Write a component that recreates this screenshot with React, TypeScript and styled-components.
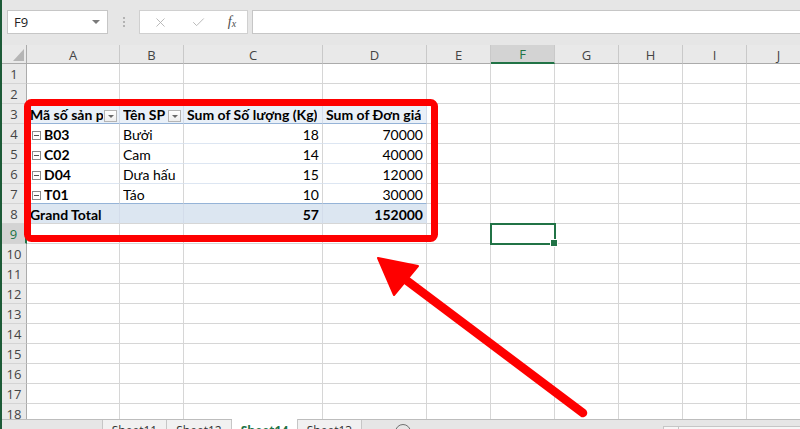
import styled, { createGlobalStyle } from "styled-components";
import { X, Check } from "lucide-react";

const CELL_FONT = `"Lato", "Noto Sans", sans-serif`;
const UI_FONT = `"Open Sans", "Noto Sans", sans-serif`;
const GREEN = "#217346";

type RowKind = "head" | "data" | "lastData" | "total";
type CellData = {
  text?: string;
  bold?: boolean;
  right?: boolean;
  filter?: boolean;
  toggle?: boolean;
};

const COLUMNS = [
  { name: "A", width: 93 },
  { name: "B", width: 64 },
  { name: "C", width: 139 },
  { name: "D", width: 104 },
  { name: "E", width: 64 },
  { name: "F", width: 64 },
  { name: "G", width: 64 },
  { name: "H", width: 64 },
  { name: "I", width: 64 },
  { name: "J", width: 64 },
];

const PIVOT: Record<number, { kind: RowKind; cells: CellData[] }> = {
  3: {
    kind: "head",
    cells: [
      { text: "Mã số sản phẩm", bold: true, filter: true },
      { text: "Tên SP", bold: true, filter: true },
      { text: "Sum of Số lượng (Kg)", bold: true },
      { text: "Sum of Đơn giá", bold: true },
    ],
  },
  4: {
    kind: "data",
    cells: [
      { text: "B03", bold: true, toggle: true },
      { text: "Bưởi" },
      { text: "18", right: true },
      { text: "70000", right: true },
    ],
  },
  5: {
    kind: "data",
    cells: [
      { text: "C02", bold: true, toggle: true },
      { text: "Cam" },
      { text: "14", right: true },
      { text: "40000", right: true },
    ],
  },
  6: {
    kind: "data",
    cells: [
      { text: "D04", bold: true, toggle: true },
      { text: "Dưa hấu" },
      { text: "15", right: true },
      { text: "12000", right: true },
    ],
  },
  7: {
    kind: "lastData",
    cells: [
      { text: "T01", bold: true, toggle: true },
      { text: "Táo" },
      { text: "10", right: true },
      { text: "30000", right: true },
    ],
  },
  8: {
    kind: "total",
    cells: [
      { text: "Grand Total", bold: true },
      {},
      { text: "57", bold: true, right: true },
      { text: "152000", bold: true, right: true },
    ],
  },
};

const SELECTED = { col: "F", row: 9 };
const ROWS = Array.from({ length: 18 }, (_, i) => i + 1);

const TABS = [
  { name: "Sheet11", width: 64 },
  { name: "Sheet12", width: 65 },
  { name: "Sheet14", width: 66, active: true },
  { name: "Sheet13", width: 64 },
];

const GlobalStyle = createGlobalStyle`
  html, body {
    margin: 0;
    padding: 0;
    overflow: hidden;
    background: #e6e6e6;
  }
  * { box-sizing: border-box; }
`;

const Page = styled.div`
  position: relative;
  display: flex;
  width: 800px;
  height: 429px;
  overflow: hidden;
  background: #e6e6e6;
`;

const WindowEdge = styled.div`
  flex: none;
  width: 2px;
  background: #1d5b38;
`;

const Workbook = styled.div`
  flex: 1;
  min-width: 0;
  display: flex;
  flex-direction: column;
`;

const FormulaBar = styled.div`
  flex: none;
  display: flex;
  align-items: center;
  height: 45px;
  padding: 10px 0 11px 5px;
  font-family: ${UI_FONT};
`;

const NameBox = styled.div`
  display: flex;
  align-items: center;
  justify-content: space-between;
  width: 101px;
  height: 24px;
  padding: 0 7px 0 6px;
  background: #fff;
  border: 1px solid #c6c6c6;
  font-size: 13px;
  color: #222;
`;

const Caret = styled.span`
  width: 0;
  height: 0;
  border-left: 4px solid transparent;
  border-right: 4px solid transparent;
  border-top: 4px solid #7a7a7a;
`;

const Grip = styled.div`
  display: flex;
  flex-direction: column;
  align-items: center;
  gap: 2px;
  width: 31px;
`;

const GripDot = styled.span`
  width: 2px;
  height: 2px;
  background: #b3b3b3;
`;

const FnBox = styled.div`
  display: grid;
  grid-template-columns: 40px 37px 30px;
  align-items: center;
  justify-items: center;
  width: 109px;
  height: 24px;
  background: #fff;
  border: 1px solid #d0d0d0;
  color: #b0b0b0;
`;

const FxLabel = styled.span`
  font-family: "Liberation Serif", serif;
  font-style: italic;
  font-size: 14px;
  color: #4d4d4d;

  sub {
    font-size: 10px;
    vertical-align: -1px;
  }
`;

const FormulaInput = styled.div`
  flex: 1;
  height: 24px;
  margin-left: 4px;
  background: #fff;
  border: 1px solid #c6c6c6;
  border-right: none;
`;

const Grid = styled.div`
  flex: none;
  display: grid;
  grid-template-columns: 25px ${COLUMNS.map((c) => `${c.width}px`).join(" ")};
  grid-template-rows: 19px;
  grid-auto-rows: 20px;
  height: 374px;
  overflow: hidden;
  background: #fff;
  font-family: ${CELL_FONT};
`;

const SelectAll = styled.div`
  position: relative;
  background: #e9e9e9;
  border-right: 1px solid #ababab;
  border-bottom: 1px solid #ababab;

  &::after {
    content: "";
    position: absolute;
    right: 2px;
    bottom: 2px;
    border-left: 11px solid transparent;
    border-bottom: 12px solid #b5b5b5;
  }
`;

const ColHeader = styled.div<{ $active?: boolean }>`
  display: flex;
  align-items: center;
  justify-content: center;
  padding-top: 1px;
  background: ${(p) => (p.$active ? "#d3d3d3" : "#e9e9e9")};
  border-right: 1px solid #c9c9c9;
  border-bottom: ${(p) => (p.$active ? `2px solid ${GREEN}` : "1px solid #ababab")};
  font-family: ${UI_FONT};
  font-size: 13px;
  color: ${(p) => (p.$active ? GREEN : "#444")};
`;

const RowHeader = styled.div<{ $active?: boolean }>`
  display: flex;
  align-items: center;
  justify-content: center;
  background: ${(p) => (p.$active ? "#d3d3d3" : "#e9e9e9")};
  border-right: ${(p) => (p.$active ? `2px solid ${GREEN}` : "1px solid #ababab")};
  border-bottom: 1px solid #d4d4d4;
  font-family: ${UI_FONT};
  font-size: 13px;
  color: ${(p) => (p.$active ? GREEN : "#444")};
`;

const rowBg = (kind?: RowKind) =>
  kind === "head" ? "#e9f0f8" : kind === "total" ? "#dce6f1" : "#fff";

const rowLine = (kind?: RowKind) =>
  kind === "head" || kind === "lastData"
    ? "#95b3d7"
    : kind === "data"
      ? "#dde6f2"
      : "#d6d6d6";

const Cell = styled.div<{
  $kind?: RowKind;
  $right?: boolean;
  $bold?: boolean;
  $selected?: boolean;
}>`
  position: relative;
  display: flex;
  align-items: flex-end;
  justify-content: ${(p) => (p.$right ? "flex-end" : "flex-start")};
  min-width: 0;
  padding: 0 3px 0 3px;
  background: ${(p) => rowBg(p.$kind)};
  border-right: 1px solid
    ${(p) => (p.$kind === "head" || p.$kind === "total" ? "#d3dcea" : "#d6d6d6")};
  border-bottom: 1px solid ${(p) => rowLine(p.$kind)};
  font-size: 14px;
  line-height: 17px;
  font-weight: ${(p) => (p.$bold ? 700 : 400)};
  color: #000;
  z-index: ${(p) => (p.$selected ? 2 : "auto")};
  outline: ${(p) => (p.$selected ? `2px solid ${GREEN}` : "none")};
  outline-offset: -1px;

  ${(p) =>
    p.$selected &&
    `
    &::after {
      content: "";
      position: absolute;
      right: -4px;
      bottom: -4px;
      width: 6px;
      height: 6px;
      background: ${GREEN};
      border: 1px solid #fff;
    }
  `}
`;

const Label = styled.span<{ $fill?: boolean }>`
  flex: ${(p) => (p.$fill ? 1 : "none")};
  min-width: 0;
  overflow: hidden;
  white-space: nowrap;
`;

const FilterButton = styled.span`
  flex: none;
  position: relative;
  width: 13px;
  height: 12px;
  margin: 0 -1px 1px 1px;
  background: linear-gradient(#ffffff, #eeeeee);
  border: 1px solid #b4b4b4;

  &::after {
    content: "";
    position: absolute;
    left: 3px;
    top: 4px;
    border-left: 3px solid transparent;
    border-right: 3px solid transparent;
    border-top: 3px solid #6a6a6a;
  }
`;

const Toggle = styled.span`
  flex: none;
  position: relative;
  width: 9px;
  height: 9px;
  margin: 0 3px 3px 2px;
  border: 1px solid #8c8c8c;
  background: #fff;

  &::after {
    content: "";
    position: absolute;
    left: 1px;
    right: 1px;
    top: 3px;
    height: 1px;
    background: #555;
  }
`;

const TabBar = styled.div`
  flex: none;
  display: flex;
  height: 30px;
  background: #e6e6e6;
  border-top: 1px solid #bdbdbd;
  font-family: ${UI_FONT};
  font-size: 12px;
`;

const TabNav = styled.div`
  width: 101px;
  border-right: 1px solid #c6c6c6;
`;

const Tab = styled.div<{ $active?: boolean; $width: number }>`
  width: ${(p) => p.$width}px;
  margin-top: ${(p) => (p.$active ? "-1px" : "0")};
  padding-top: ${(p) => (p.$active ? "4px" : "3px")};
  text-align: center;
  line-height: 16px;
  background: ${(p) => (p.$active ? "#fff" : "#f1f1f1")};
  border-right: 1px solid #c6c6c6;
  color: ${(p) => (p.$active ? GREEN : "#333")};
  font-weight: ${(p) => (p.$active ? 700 : 400)};
`;

const AddSheet = styled.div`
  width: 16px;
  height: 16px;
  margin: 4px 0 0 33px;
  border: 1px solid #707070;
  border-radius: 50%;
`;

const ScrollGrip = styled.div`
  margin: 9px 0 0 auto;
  width: 2px;
  height: 2px;
  background: #555;
`;

const HScroll = styled.div`
  display: flex;
  width: 137px;
  height: 20px;
  margin: 6px 0 0 14px;
  background: #f7f7f7;
  border: 1px solid #c6c6c6;
  border-right: none;
`;

const ScrollButton = styled.div`
  width: 15px;
  border-right: 1px solid #c6c6c6;
`;

const Annotation = styled.svg`
  position: absolute;
  left: 0;
  top: 0;
  width: 800px;
  height: 429px;
  pointer-events: none;
  z-index: 10;
`;

const renderCell = (row: number, col: string, index: number) => {
  const pivot = PIVOT[row];
  const selected = SELECTED.row === row && SELECTED.col === col;
  const data = pivot && index < 4 ? pivot.cells[index] : undefined;
  const kind = pivot && index < 4 ? pivot.kind : undefined;

  return (
    <Cell
      key={`${col}${row}`}
      $kind={kind}
      $right={data?.right}
      $bold={data?.bold}
      $selected={selected}
    >
      {data?.toggle && <Toggle />}
      {data?.text && <Label $fill={data.filter}>{data.text}</Label>}
      {data?.filter && <FilterButton />}
    </Cell>
  );
};

const App = () => {
  return (
    <Page>
      <GlobalStyle />
      <WindowEdge />
      <Workbook>
        <FormulaBar>
          <NameBox>
            <span>F9</span>
            <Caret />
          </NameBox>
          <Grip>
            <GripDot />
            <GripDot />
            <GripDot />
          </Grip>
          <FnBox>
            <X size={15} strokeWidth={1.4} />
            <Check size={15} strokeWidth={1.4} />
            <FxLabel>
              f<sub>x</sub>
            </FxLabel>
          </FnBox>
          <FormulaInput />
        </FormulaBar>

        <Grid>
          <SelectAll />
          {COLUMNS.map((c) => (
            <ColHeader key={c.name} $active={c.name === SELECTED.col}>
              {c.name}
            </ColHeader>
          ))}
          {ROWS.map((row) => [
            <RowHeader key={`h${row}`} $active={row === SELECTED.row}>
              {row}
            </RowHeader>,
            ...COLUMNS.map((c, i) => renderCell(row, c.name, i)),
          ])}
        </Grid>

        <TabBar>
          <TabNav />
          {TABS.map((t) => (
            <Tab key={t.name} $width={t.width} $active={t.active}>
              {t.name}
            </Tab>
          ))}
          <AddSheet />
          <ScrollGrip />
          <HScroll>
            <ScrollButton />
          </HScroll>
        </TabBar>
      </Workbook>

      <Annotation viewBox="0 0 800 429">
        <rect
          x="27.5"
          y="102.5"
          width="407"
          height="136"
          rx="4"
          fill="none"
          stroke="#fe0000"
          strokeWidth="7"
        />
        <line
          x1="583"
          y1="413"
          x2="398"
          y2="274"
          stroke="#fe0000"
          strokeWidth="8.5"
          strokeLinecap="round"
        />
        <polygon
          points="378,258 418,266 394,295"
          fill="#fe0000"
          stroke="#fe0000"
          strokeWidth="2"
          strokeLinejoin="round"
        />
      </Annotation>
    </Page>
  );
};

export default App;
